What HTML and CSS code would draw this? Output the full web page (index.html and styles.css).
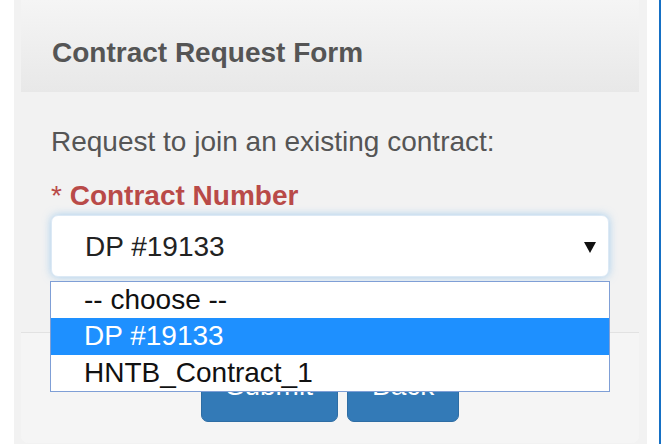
FILE: index.html
```html
<!DOCTYPE html>
<html lang="en">
<head>
<meta charset="utf-8">
<title>Contract Request Form</title>
<link rel="stylesheet" href="styles.css">
</head>
<body>
<div class="page">
  <div class="panel-wrap">
    <div class="panel">
      <div class="panel-heading">
        <h3 class="panel-title">Contract Request Form</h3>
      </div>
      <div class="panel-body">
        <p class="intro">Request to join an existing contract:</p>
        <label class="field-label"><span class="req">*</span> Contract Number</label>
        <div class="select-wrap">
          <div class="select">
            <span class="select-value">DP #19133</span>
            <svg class="caret" width="12" height="11" viewBox="0 0 12 11"><polygon points="0,0 12,0 6,11" fill="#111"/></svg>
          </div>
          <ul class="dropdown">
            <li class="option">-- choose --</li>
            <li class="option selected">DP #19133</li>
            <li class="option">HNTB_Contract_1</li>
          </ul>
        </div>
      </div>
      <div class="panel-footer">
        <button class="btn">Submit</button>
        <button class="btn">Back</button>
      </div>
    </div>
  </div>
  <div class="edge-bar"></div>
</div>
</body>
</html>
```
FILE: styles.css
```css
html, body {
  margin: 0;
  padding: 0;
  height: 100%;
  overflow: hidden;
  background: #fff;
  font-family: "Liberation Sans", Arial, sans-serif;
  font-size: 28px;
  color: #555;
}

.page {
  display: flex;
  height: 100%;
  padding-left: 14px;
}

.panel-wrap {
  width: 633px;
  background: #f2f2f2;
  padding: 0 8px 0 7px;
  box-sizing: border-box;
}

.edge-bar {
  width: 2px;
  margin-left: 12px;
  background: #1670c4;
}

.panel {
  display: flex;
  flex-direction: column;
  height: 443px;
  border-radius: 0 0 7px 7px;
}

.panel-heading {
  height: 92px;
  box-sizing: border-box;
  padding: 13px 31px 0;
  display: flex;
  align-items: center;
  background: linear-gradient(to bottom, #f5f5f5 0%, #e8e8e8 100%);
}

.panel-title {
  margin: 0;
  font-size: 28px;
  font-weight: bold;
  color: #555;
  line-height: 32px;
}

.panel-body {
  padding: 34px 30px 55px;
}

.intro {
  margin: 0 0 22px;
  line-height: 32px;
}

.field-label {
  display: block;
  margin-bottom: 3px;
  line-height: 32px;
  font-weight: bold;
  color: #b94a48;
}

.req {
  font-weight: normal;
}

.select-wrap {
  position: relative;
}

.select {
  height: 62px;
  box-sizing: border-box;
  display: flex;
  align-items: center;
  justify-content: space-between;
  padding: 2px 12px 0 33px;
  background: #fff;
  border: 1px solid #dce9f5;
  border-radius: 7px;
  box-shadow: 0 0 9px rgba(102, 175, 233, 0.55);
  color: #222;
}

.select-value {
  line-height: 32px;
}

/* open option list drawn over the footer */
.dropdown {
  position: absolute;
  top: 66px;
  left: -1px;
  width: 560px;
  margin: 0;
  padding: 0;
  list-style: none;
  background: #fff;
  border: 1px solid #7f9fd6;
  box-sizing: border-box;
  z-index: 2;
}

.option {
  height: 36.3px;
  line-height: 36px;
  padding-left: 33px;
  color: #111;
}

.option.selected {
  background: #1e90ff;
  color: #fff;
}

.panel-footer {
  flex: 1;
  display: flex;
  justify-content: center;
  align-items: flex-start;
  gap: 9px;
  padding-top: 29px;
  background: #f5f5f5;
  border-top: 1px solid #e2e2e2;
  border-radius: 0 0 7px 7px;
}

.btn {
  height: 60px;
  box-sizing: border-box;
  padding: 0 24px 12px;
  font-family: inherit;
  font-size: 28px;
  color: #fff;
  background: #337ab7;
  border: 1px solid #2e6da4;
  border-radius: 7px;
}
```
